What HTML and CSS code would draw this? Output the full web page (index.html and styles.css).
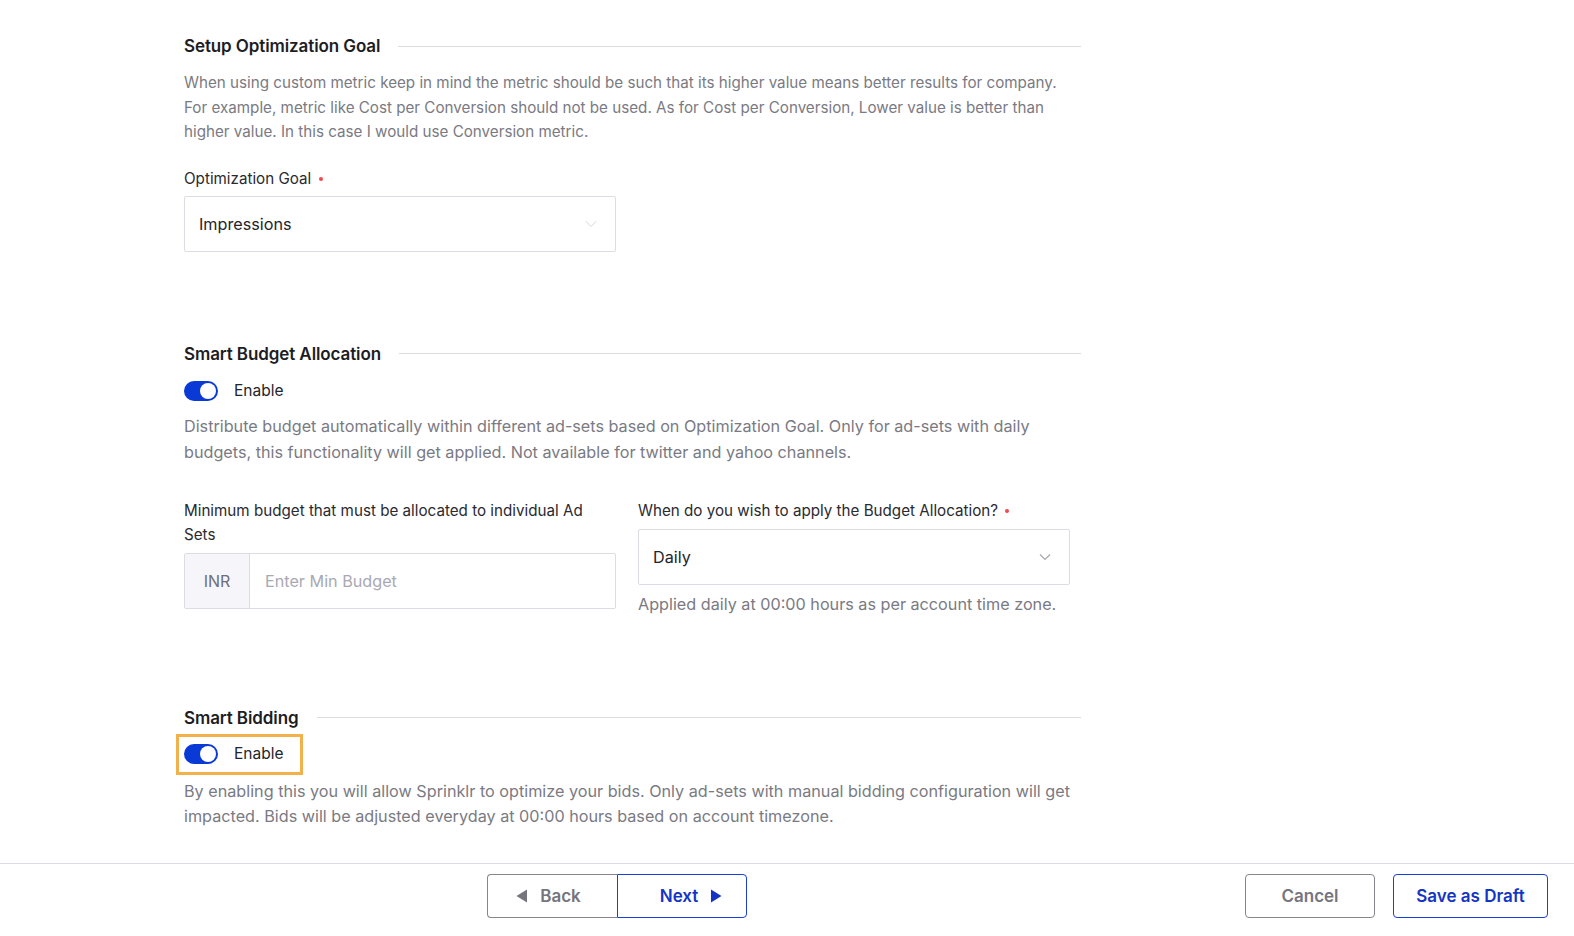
FILE: index.html
```html
<!DOCTYPE html>
<html lang="en">
<head>
<meta charset="utf-8">
<title>Smart Settings</title>
<link rel="stylesheet" href="styles.css">
</head>
<body>
<div class="page">
  <main class="content">
    <section class="section">
      <div class="section-head"><h2>Setup Optimization Goal</h2><span class="rule"></span></div>
      <p class="desc desc-1">When using custom metric keep in mind the metric should be such that its higher value means better results for company.<br>For example, metric like Cost per Conversion should not be used. As for Cost per Conversion, Lower value is better than<br>higher value. In this case I would use Conversion metric.</p>
      <div class="field field-goal">
        <label class="label">Optimization Goal <span class="req"></span></label>
        <div class="select">
          <span class="select-value">Impressions</span>
          <svg class="chev chev-faint" width="12" height="8" viewBox="0 0 12 8"><path d="M1 1.5l5 5 5-5" fill="none" stroke="currentColor" stroke-width="1.2"/></svg>
        </div>
      </div>
    </section>

    <section class="section section-budget">
      <div class="section-head"><h2>Smart Budget Allocation</h2><span class="rule"></span></div>
      <div class="toggle-row">
        <span class="toggle"><span class="knob"></span></span>
        <span class="toggle-label">Enable</span>
      </div>
      <p class="desc desc-2">Distribute budget automatically within different ad-sets based on Optimization Goal. Only for ad-sets with daily<br>budgets, this functionality will get applied. Not available for twitter and yahoo channels.</p>
      <div class="two-col">
        <div class="field">
          <label class="label">Minimum budget that must be allocated to individual Ad<br>Sets</label>
          <div class="input-group">
            <span class="addon">INR</span>
            <span class="input-text">Enter Min Budget</span>
          </div>
        </div>
        <div class="field">
          <label class="label">When do you wish to apply the Budget Allocation? <span class="req"></span></label>
          <div class="select">
            <span class="select-value">Daily</span>
            <svg class="chev" width="12" height="8" viewBox="0 0 12 8"><path d="M1 1.5l5 5 5-5" fill="none" stroke="currentColor" stroke-width="1.2"/></svg>
          </div>
          <p class="helper">Applied daily at 00:00 hours as per account time zone.</p>
        </div>
      </div>
    </section>

    <section class="section section-bidding">
      <div class="section-head"><h2>Smart Bidding</h2><span class="rule"></span></div>
      <div class="toggle-row highlighted">
        <span class="toggle"><span class="knob"></span></span>
        <span class="toggle-label">Enable</span>
      </div>
      <p class="desc desc-3">By enabling this you will allow Sprinklr to optimize your bids. Only ad-sets with manual bidding configuration will get<br>impacted. Bids will be adjusted everyday at 00:00 hours based on account timezone.</p>
    </section>
  </main>

  <footer class="footer">
    <div class="nav-group">
      <button class="btn btn-back"><svg width="12" height="14" viewBox="0 0 12 14"><path d="M11 0.5v13L0.5 7z" fill="currentColor"/></svg>Back</button>
      <button class="btn btn-next">Next<svg width="12" height="14" viewBox="0 0 12 14"><path d="M1 0.5v13L11.5 7z" fill="currentColor"/></svg></button>
    </div>
    <div class="action-group">
      <button class="btn btn-cancel">Cancel</button>
      <button class="btn btn-draft">Save as Draft</button>
    </div>
  </footer>
</div>
</body>
</html>
```

FILE: styles.css
```css
* { box-sizing: border-box; }

html, body {
  margin: 0;
  padding: 0;
  background: #ffffff;
}

body {
  font-family: Inter, "Noto Sans", "Liberation Sans", sans-serif;
  color: #24242b;
  width: 1574px;
  height: 936px;
  overflow: hidden;
}

.page {
  display: flex;
  flex-direction: column;
  height: 936px;
}

.content {
  flex: 1;
  padding: 34px 0 0 184px;
  width: 1081px;
}

.section-head {
  display: flex;
  align-items: center;
  gap: 18px;
  height: 24px;
}

.section-head h2 {
  margin: 0;
  font-size: 17px;
  font-weight: 600;
  color: #1d1d24;
  white-space: nowrap;
  letter-spacing: -0.1px;
}

.rule {
  flex: 1;
  height: 1px;
  background: #dcdce3;
}

.desc {
  margin: 0;
  font-size: 16.2px;
  color: #7a7a83;
  white-space: nowrap;
}

.desc-1 {
  margin-top: 13px;
  line-height: 24.5px;
  font-size: 15.2px;
}

.field-goal {
  margin-top: 22px;
  width: 432px;
}

.label {
  display: block;
  font-size: 15.2px;
  line-height: 24px;
  color: #2a2a31;
}

.req {
  display: inline-block;
  width: 4px;
  height: 4px;
  border-radius: 50%;
  background: #f0484f;
  vertical-align: middle;
  margin-left: 3px;
}

.select {
  margin-top: 5px;
  height: 56px;
  border: 1px solid #dcdce3;
  border-radius: 2px;
  display: flex;
  align-items: center;
  justify-content: space-between;
  padding: 0 18px 0 14px;
  background: #fff;
}

.select-value {
  font-size: 16.2px;
  color: #24242b;
}

.chev {
  color: #a6a6b0;
}

.chev-faint {
  color: #e6e6ec;
}

.section-budget {
  margin-top: 90px;
}

.toggle-row {
  display: flex;
  align-items: center;
  gap: 16px;
  height: 24px;
  margin-top: 13px;
  width: max-content;
  position: relative;
}

.toggle {
  width: 34px;
  height: 20px;
  border-radius: 10px;
  background: #0a3ad6;
  position: relative;
  display: inline-block;
}

.knob {
  position: absolute;
  right: 2px;
  top: 2px;
  width: 16px;
  height: 16px;
  border-radius: 50%;
  background: #fff;
}

.toggle-label {
  font-size: 15.5px;
  color: #24242b;
}

.desc-2 {
  margin-top: 10px;
  line-height: 26px;
}

.two-col {
  display: grid;
  grid-template-columns: 432px 432px;
  column-gap: 22px;
  margin-top: 34px;
}

.two-col .select {
  margin-top: 6px;
}

.input-group {
  margin-top: 6px;
  height: 56px;
  border: 1px solid #dcdce3;
  border-radius: 2px;
  display: flex;
  align-items: stretch;
}

.addon {
  width: 65px;
  background: #f6f6fa;
  border-right: 1px solid #dcdce3;
  display: flex;
  align-items: center;
  justify-content: center;
  font-size: 16px;
  color: #6e6e77;
}

.input-text {
  display: flex;
  align-items: center;
  padding-left: 15px;
  font-size: 16.2px;
  color: #a9a9b2;
}

.helper {
  margin: 7px 0 0;
  font-size: 16.2px;
  line-height: 24px;
  color: #7a7a83;
}

.section-bidding {
  margin-top: 90px;
}

.section-bidding .toggle-row {
  margin-top: 12px;
}

.highlighted::after {
  content: "";
  position: absolute;
  left: -8px;
  right: -20px;
  top: -8px;
  bottom: -9px;
  border: 3px solid #f2b14a;
}

.desc-3 {
  margin-top: 13px;
  line-height: 25.5px;
}

.footer {
  height: 73px;
  border-top: 1px solid #dcdce3;
  display: flex;
  align-items: flex-start;
  padding: 10px 26px 0 487px;
}

.nav-group {
  display: flex;
}

.action-group {
  margin-left: auto;
  display: flex;
  gap: 18px;
}

.btn {
  height: 44px;
  font-family: inherit;
  font-size: 17px;
  font-weight: 600;
  background: #fff;
  border-radius: 4px;
  display: inline-flex;
  align-items: center;
  justify-content: center;
  gap: 12px;
  padding: 0;
  cursor: pointer;
}

.btn-back {
  width: 130px;
  border: 1px solid #85858d;
  border-right: none;
  border-radius: 4px 0 0 4px;
  color: #75757e;
  padding-right: 8px;
}

.btn-next {
  width: 130px;
  border: 1px solid #1a3fd4;
  border-radius: 0 4px 4px 0;
  color: #1435c4;
  padding-left: 18px;
}

.btn-cancel {
  width: 130px;
  border: 1px solid #85858d;
  color: #75757e;
}

.btn-draft {
  width: 155px;
  border: 1.5px solid #1a3fd4;
  color: #1435c4;
}
```
